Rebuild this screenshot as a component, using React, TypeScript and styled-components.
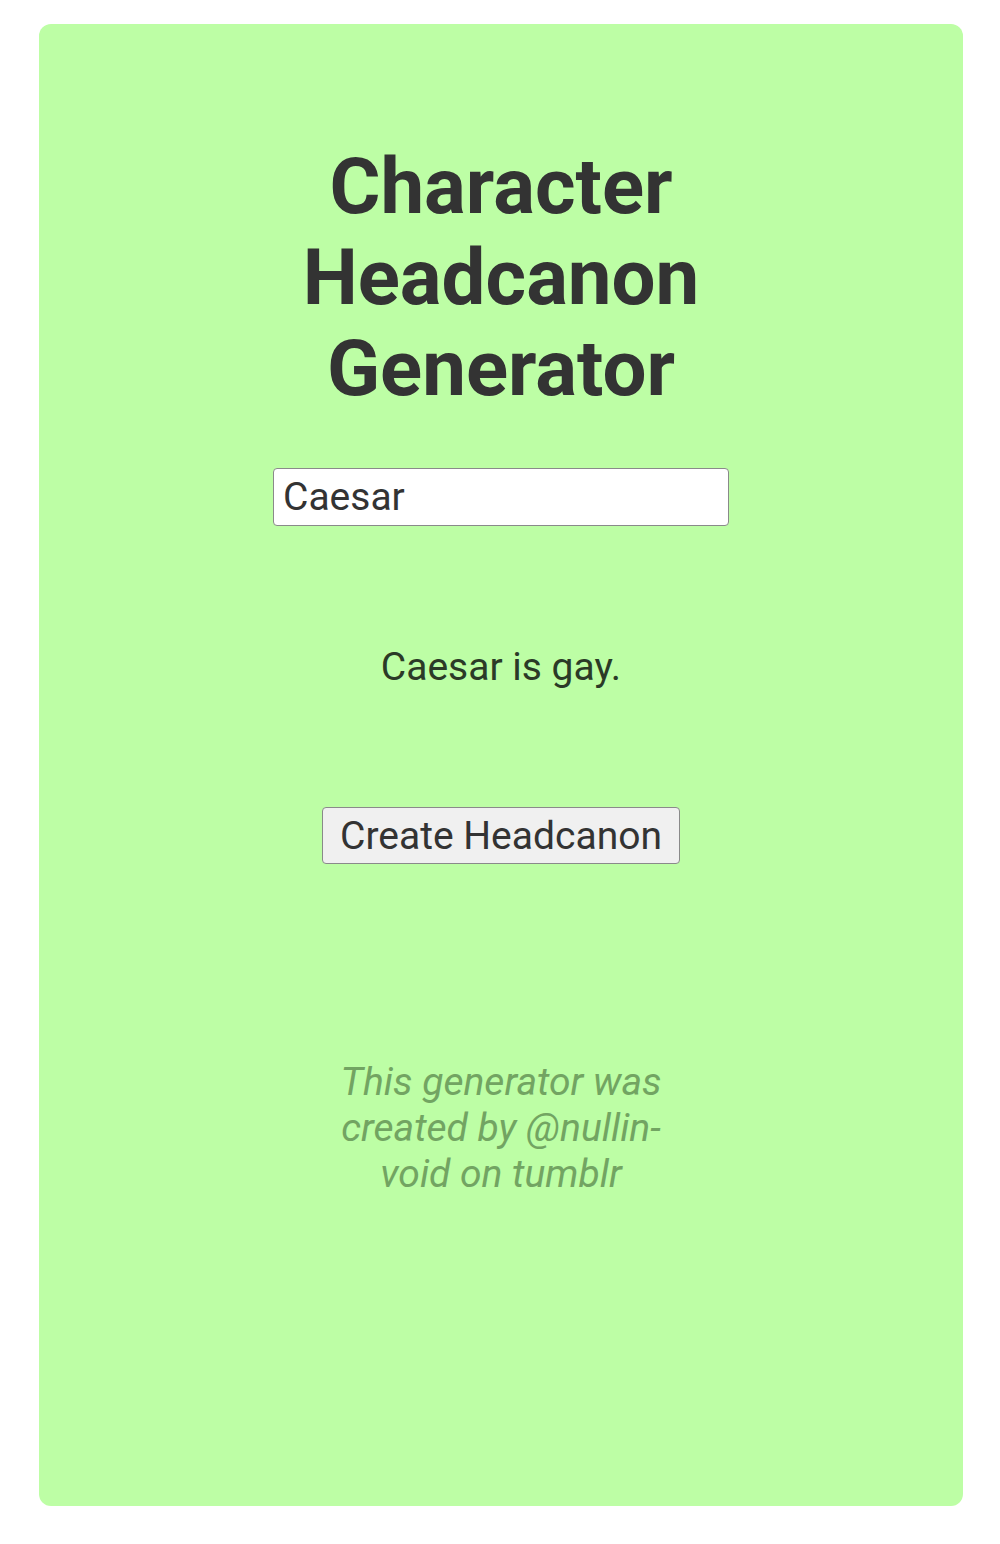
import React, {useState} from "react";
import styled, {createGlobalStyle} from "styled-components";

const headcanons = [
    "is gay.",
];

const GlobalStyle = createGlobalStyle`
  body {
    margin: 0;
    background: #ffffff;
    font-family: Roboto, "Noto Sans", sans-serif;
  }
`

export default function App() {
    const [name, setName] = useState("Caesar");
    const [result, setResult] = useState("Caesar is gay.");

    const create = () => {
        const pick = headcanons[Math.floor(Math.random() * headcanons.length)];
        setResult(`${name} ${pick}`);
    };

    return (
        <>
            <GlobalStyle/>
            <PageStyle>
                <PanelStyle>
                    <TitleStyle>Character Headcanon Generator</TitleStyle>
                    <NameInput value={name} onChange={(ev) => setName(ev.target.value)}/>
                    <ResultStyle>{result}</ResultStyle>
                    <CreateButton onClick={create}>Create Headcanon</CreateButton>
                    <CreditStyle>This generator was created by @nullin-void on tumblr</CreditStyle>
                </PanelStyle>
            </PageStyle>
        </>
    );
}

const PageStyle = styled.div`
  padding: 24px 37px 38px 39px;
`

const PanelStyle = styled.div`
  background: #bdfea5;
  border-radius: 12px;
  height: 1482px;
  box-sizing: border-box;
  padding-top: 117px;
  display: flex;
  flex-direction: column;
  align-items: center;
  text-align: center;
`

const TitleStyle = styled.h1`
  margin: 0;
  width: 420px;
  font-size: 78px;
  font-weight: 700;
  line-height: normal;
  color: #333333;
`

const NameInput = styled.input`
  margin-top: 54px;
  width: 456px;
  height: 58px;
  box-sizing: border-box;
  padding: 0 9px;
  border: 1.5px solid #8a8a8a;
  border-radius: 4px;
  background: #ffffff;
  font-family: Roboto, sans-serif;
  font-size: 39px;
  color: #333333;
  outline: none;
`

const ResultStyle = styled.p`
  margin: 118px 0 0;
  font-size: 39px;
  line-height: normal;
  color: #2b3a27;
`

const CreateButton = styled.button`
  margin-top: 117px;
  width: 358px;
  height: 57px;
  padding: 0;
  border: 1.5px solid #8a8a8a;
  border-radius: 4px;
  background: #f0f0f0;
  font-family: Roboto, sans-serif;
  font-size: 39px;
  color: #333333;
  cursor: pointer;
`

const CreditStyle = styled.p`
  margin: 195px 0 0;
  width: 330px;
  font-size: 39px;
  font-style: italic;
  line-height: normal;
  color: #72a462;
`
